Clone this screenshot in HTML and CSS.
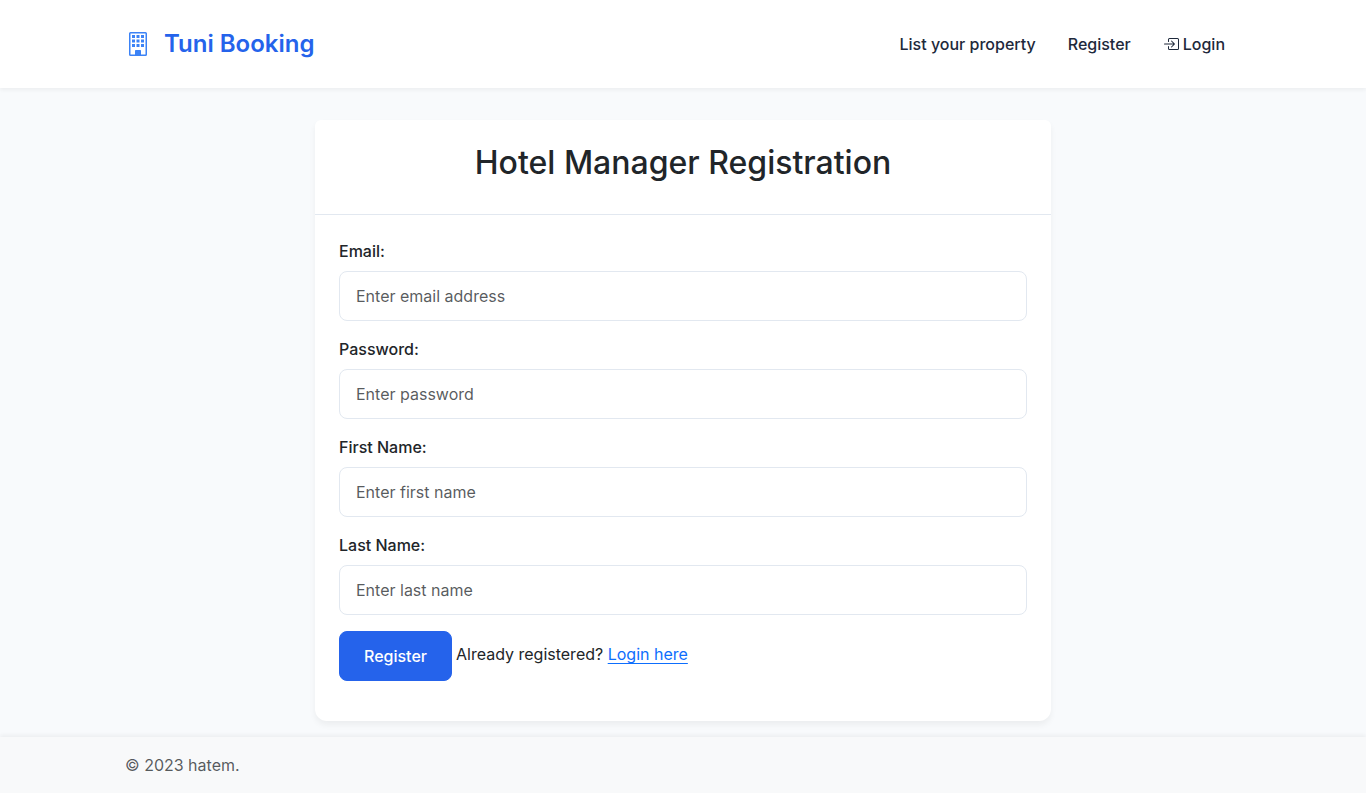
FILE: index.html
```
<!DOCTYPE html>
<html lang="en">
<head>
<meta charset="utf-8">
<meta name="viewport" content="width=device-width, initial-scale=1">
<title>Hotel Manager Registration</title>
<link rel="stylesheet" href="styles.css">
</head>
<body>
<header class="navbar">
  <div class="container navbar-inner">
    <a class="brand" href="#">
      <svg class="brand-icon" viewBox="0 0 24 24" fill="currentColor" aria-hidden="true">
        <path fill-rule="evenodd" d="M4.500 0h15a1.500 1.500 0 0 1 1.500 1.500v21a1.500 1.500 0 0 1-1.500 1.500h-15a1.500 1.500 0 0 1-1.500-1.500v-21a1.500 1.500 0 0 1 1.500-1.500zM4.500 1.500v21h4.500v-3.750q0-.75.75-.75h4.500q.75 0 .75.75v3.750h4.500v-21z"/>
        <path d="M6 3h3v3H6zM10.500 3h3v3h-3zM15 3h3v3h-3zM6 7.500h3v3H6zM10.500 7.500h3v3h-3zM15 7.500h3v3h-3zM6 12h3v3H6zM10.500 12h3v3h-3zM15 12h3v3h-3z"/>
      </svg>
      <span>Tuni Booking</span>
    </a>
    <nav class="nav">
      <a class="nav-link" href="#">List your property</a>
      <a class="nav-link" href="#">Register</a>
      <a class="nav-link" href="#">
        <svg class="nav-icon" viewBox="0 0 16 16" fill="currentColor" aria-hidden="true">
          <path d="M6 3.5a.5.5 0 0 1 .5-.5h8a.5.5 0 0 1 .5.5v9a.5.5 0 0 1-.5.5h-8a.5.5 0 0 1-.5-.5v-2a.5.5 0 0 0-1 0v2A1.500 1.500 0 0 0 6.500 14h8a1.500 1.500 0 0 0 1.500-1.500v-9A1.500 1.500 0 0 0 14.500 2h-8A1.500 1.500 0 0 0 5 3.500v2a.5.5 0 0 0 1 0z"/>
          <path d="M11.854 8.354a.5.5 0 0 0 0-.708l-3-3a.5.5 0 1 0-.708.708L10.293 7.500H1.500a.5.5 0 0 0 0 1h8.793l-2.147 2.146a.5.5 0 0 0 .708.708z"/>
        </svg>
        Login
      </a>
    </nav>
  </div>
</header>
<main class="main">
  <section class="card">
    <div class="card-header"><h1 class="card-title">Hotel Manager Registration</h1></div>
    <form class="card-body">
      <div class="field">
        <label class="label" for="email">Email:</label>
        <input class="input" id="email" type="email" placeholder="Enter email address">
      </div>
      <div class="field">
        <label class="label" for="password">Password:</label>
        <input class="input" id="password" type="password" placeholder="Enter password">
      </div>
      <div class="field">
        <label class="label" for="first-name">First Name:</label>
        <input class="input" id="first-name" type="text" placeholder="Enter first name">
      </div>
      <div class="field">
        <label class="label" for="last-name">Last Name:</label>
        <input class="input" id="last-name" type="text" placeholder="Enter last name">
      </div>
      <div class="actions">
        <button class="button" type="submit">Register</button>
        <span class="hint">Already registered? <a class="link" href="#">Login here</a></span>
      </div>
    </form>
  </section>
</main>
<footer class="footer">
  <div class="container"><span class="copyright">© 2023 hatem.</span></div>
</footer>
</body>
</html>
```
FILE: styles.css
```
*, *::before, *::after { box-sizing: border-box; }
body {
  margin: 0;
  min-height: 100vh;
  display: flex;
  flex-direction: column;
  background: #f8fafc;
  color: #212529;
  font-family: Inter, "Liberation Sans", sans-serif;
  font-size: 16px;
  line-height: 24px;
}
.container {
  width: 100%;
  max-width: 1140px;
  margin: 0 auto;
  padding: 0 12px;
}
.navbar {
  padding: 16px 0;
  background: #fff;
  box-shadow: 0 2px 4px rgba(0, 0, 0, 0.05);
}
.navbar-inner {
  display: flex;
  align-items: center;
  justify-content: space-between;
}
.brand {
  display: flex;
  align-items: center;
  gap: 14px;
  padding: 10px 1px;
  color: #2563eb;
  font-size: 24px;
  font-weight: 600;
  line-height: 36px;
  text-decoration: none;
}
.brand-icon {
  width: 24px;
  height: 24px;
  color: #3b82f6;
}
.nav { display: flex; }
.nav-link {
  display: flex;
  align-items: center;
  gap: 4px;
  padding: 8px 16px;
  color: #1e293b;
  font-weight: 500;
  text-decoration: none;
}
.nav-icon {
  width: 16px;
  height: 16px;
}
.main {
  flex: 1;
  padding: 32px 12px 16px;
}
.card {
  max-width: 736px;
  margin: 0 auto;
  background: #fff;
  border-radius: 6px 6px 12px 12px;
  box-shadow: 0 4px 6px rgba(0, 0, 0, 0.05);
}
.card-header {
  padding: 24px 24px 32px;
  border-bottom: 1px solid #e2e8f0;
}
.card-title {
  margin: 0;
  font-size: 32px;
  font-weight: 500;
  line-height: 38px;
  text-align: center;
}
.card-body { padding: 24px 24px 40px; }
.field { margin-bottom: 16px; }
.label {
  display: block;
  margin-bottom: 8px;
  font-weight: 500;
}
.input {
  display: block;
  width: 100%;
  padding: 12px 16px;
  border: 1px solid #e2e8f0;
  border-radius: 8px;
  background: #fff;
  color: #212529;
  font: inherit;
}
.input::placeholder {
  color: rgba(33, 37, 41, 0.75);
  opacity: 1;
}
.actions {
  display: flex;
  gap: 4px;
}
.button {
  padding: 12px 24px;
  border: 1px solid #2563eb;
  border-radius: 8px;
  background: #2563eb;
  color: #fff;
  font: inherit;
  font-weight: 500;
}
.hint { padding-top: 11px; }
.link {
  color: #0d6efd;
  text-underline-offset: 3px;
}
.footer {
  padding: 16px 0;
  background: #f8f9fa;
  box-shadow: 0 -2px 4px rgba(0, 0, 0, 0.05);
}
.copyright { color: rgba(33, 37, 41, 0.75); }
```
